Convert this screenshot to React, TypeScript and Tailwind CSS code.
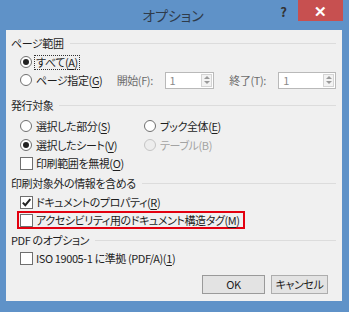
import React from 'react'

const font = "font-['Noto_Sans_CJK_JP','Noto_Sans',sans-serif] [font-feature-settings:'palt']"

function Radio({ checked, disabled }: { checked?: boolean; disabled?: boolean }) {
  return (
    <span
      className={`flex h-[12px] w-[12px] shrink-0 items-center justify-center rounded-full border ${
        disabled ? 'border-[#c5c5c5] bg-[#ededed]' : 'border-[#6f6f6f] bg-white'
      }`}
    >
      {checked && <span className="h-[6px] w-[6px] rounded-full bg-[#222]" />}
    </span>
  )
}

function Check({ checked }: { checked?: boolean }) {
  return (
    <span className="flex h-[13px] w-[13px] shrink-0 items-center justify-center border border-[#6f6f6f] bg-white">
      {checked && (
        <svg viewBox="0 0 11 11" className="h-[11px] w-[11px]">
          <path d="M1.8 5.6 L4.3 8.2 L9.3 2.2" fill="none" stroke="#222" strokeWidth="2" />
        </svg>
      )}
    </span>
  )
}

function Header({ children, className = '' }: { children: React.ReactNode; className?: string }) {
  return (
    <div className={`flex h-[18px] items-center gap-[6px] pl-[5px] ${className}`}>
      <span className="whitespace-nowrap text-[#1e1e1e]">{children}</span>
      <span className="h-px flex-1 bg-[#dcdcdc]" />
    </div>
  )
}

function Spin({ w }: { w: string }) {
  return (
    <span className={`flex h-[17px] ${w} items-center justify-between border border-[#b9b9b9] bg-white pl-[4px]`}>
      <span className="text-[#8a8a8a]">1</span>
      <span className="mr-[1px] flex h-[13px] w-[11px] flex-col items-center justify-center gap-[2px] border border-[#d4d4d4] bg-[#f3f3f3]">
        <span className="h-0 w-0 border-x-[3px] border-b-[3px] border-x-transparent border-b-[#9a9a9a]" />
        <span className="h-0 w-0 border-x-[3px] border-t-[3px] border-x-transparent border-t-[#9a9a9a]" />
      </span>
    </span>
  )
}

const U = ({ children }: { children: React.ReactNode }) => <span className="underline underline-offset-2">{children}</span>

export default function App() {
  return (
    <div className={`flex h-[312px] w-[349px] flex-col bg-[#5f92c8] text-[11px] leading-none tracking-[-0.4px] ${font}`}>
      {/* Title bar */}
      <div className="flex h-[30px] items-start">
        <div className="flex h-[30px] flex-1 items-center justify-center pl-[70px] text-[14px] tracking-normal text-[#2f3b4a]">
          オプション
        </div>
        <div className="flex h-[22px] w-[15px] items-center justify-center text-[13px] font-bold text-[#333]">?</div>
        <div className="ml-[7px] mr-[6px] flex h-[21px] w-[45px] items-center justify-center bg-[#c75050] text-[15px] font-bold text-white">
          ✕
        </div>
      </div>

      {/* Client */}
      <div className="ml-[6px] mr-[7px] flex h-[271px] flex-col bg-[#f0f0f0] pr-[6px] text-[#1e1e1e]">
        <Header className="mt-[4px]">ページ範囲</Header>
        <div className="mt-[1px] flex h-[18px] items-center pl-[14px]">
          <Radio checked />
          <span className="ml-[2px] border border-dotted border-[#333] px-px py-[1px]">
            すべて(<U>A</U>)
          </span>
        </div>
        <div className="flex h-[18px] items-center pl-[14px]">
          <div className="flex w-[97px] items-center">
            <Radio />
            <span className="ml-[4px]">
              ページ指定(<U>G</U>)
            </span>
          </div>
          <span className="w-[48px] text-[#6d6d6d]">開始(F):</span>
          <Spin w="w-[50px]" />
          <span className="ml-[15px] w-[49px] text-[#6d6d6d]">終了(T):</span>
          <Spin w="w-[58px]" />
        </div>

        <Header className="mt-[7px]">発行対象</Header>
        <div className="mt-[3px] flex h-[18px] items-center pl-[14px]">
          <div className="flex w-[124px] items-center">
            <Radio />
            <span className="ml-[4px]">
              選択した部分(<U>S</U>)
            </span>
          </div>
          <Radio />
          <span className="ml-[4px]">
            ブック全体(<U>E</U>)
          </span>
        </div>
        <div className="mt-px flex h-[18px] items-center pl-[14px]">
          <div className="flex w-[124px] items-center">
            <Radio checked />
            <span className="ml-[4px]">
              選択したシート(<U>V</U>)
            </span>
          </div>
          <Radio disabled />
          <span className="ml-[4px] text-[#a3a3a3]">テーブル(B)</span>
        </div>
        <div className="flex h-[18px] items-center pl-[14px]">
          <Check />
          <span className="ml-[3px]">
            印刷範囲を無視(<U>O</U>)
          </span>
        </div>

        <Header className="mt-[2px]">印刷対象外の情報を含める</Header>
        <div className="mt-px flex h-[18px] items-center pl-[14px]">
          <Check checked />
          <span className="ml-[3px]">
            ドキュメントのプロパティ(<U>R</U>)
          </span>
        </div>
        <div className="flex h-[18px] items-center pl-[11px]">
          <div className="flex h-[18px] w-[228px] items-center border-2 border-[#e3000f] pl-px">
            <Check />
            <span className="ml-[3px] whitespace-nowrap">
              アクセシビリティ用のドキュメント構造タグ(<U>M</U>)
            </span>
          </div>
        </div>

        <Header className="mt-[2px]">PDF のオプション</Header>
        <div className="flex h-[18px] items-center pl-[14px]">
          <Check />
          <span className="ml-[3px]">
            ISO 19005-1 に準拠 (PDF/A)(<U>1</U>)
          </span>
        </div>

        <div className="mt-[8px] flex justify-end gap-[6px] pr-[8px]">
          <button className="flex h-[19px] w-[63px] items-center justify-center border border-[#9a9a9a] bg-[#e3e3e3] text-[11px] text-[#1e1e1e]">
            OK
          </button>
          <button className="flex h-[19px] w-[57px] items-center justify-center border border-[#adadad] bg-[#e3e3e3] text-[11px] text-[#1e1e1e]">
            キャンセル
          </button>
        </div>
      </div>
    </div>
  )
}
